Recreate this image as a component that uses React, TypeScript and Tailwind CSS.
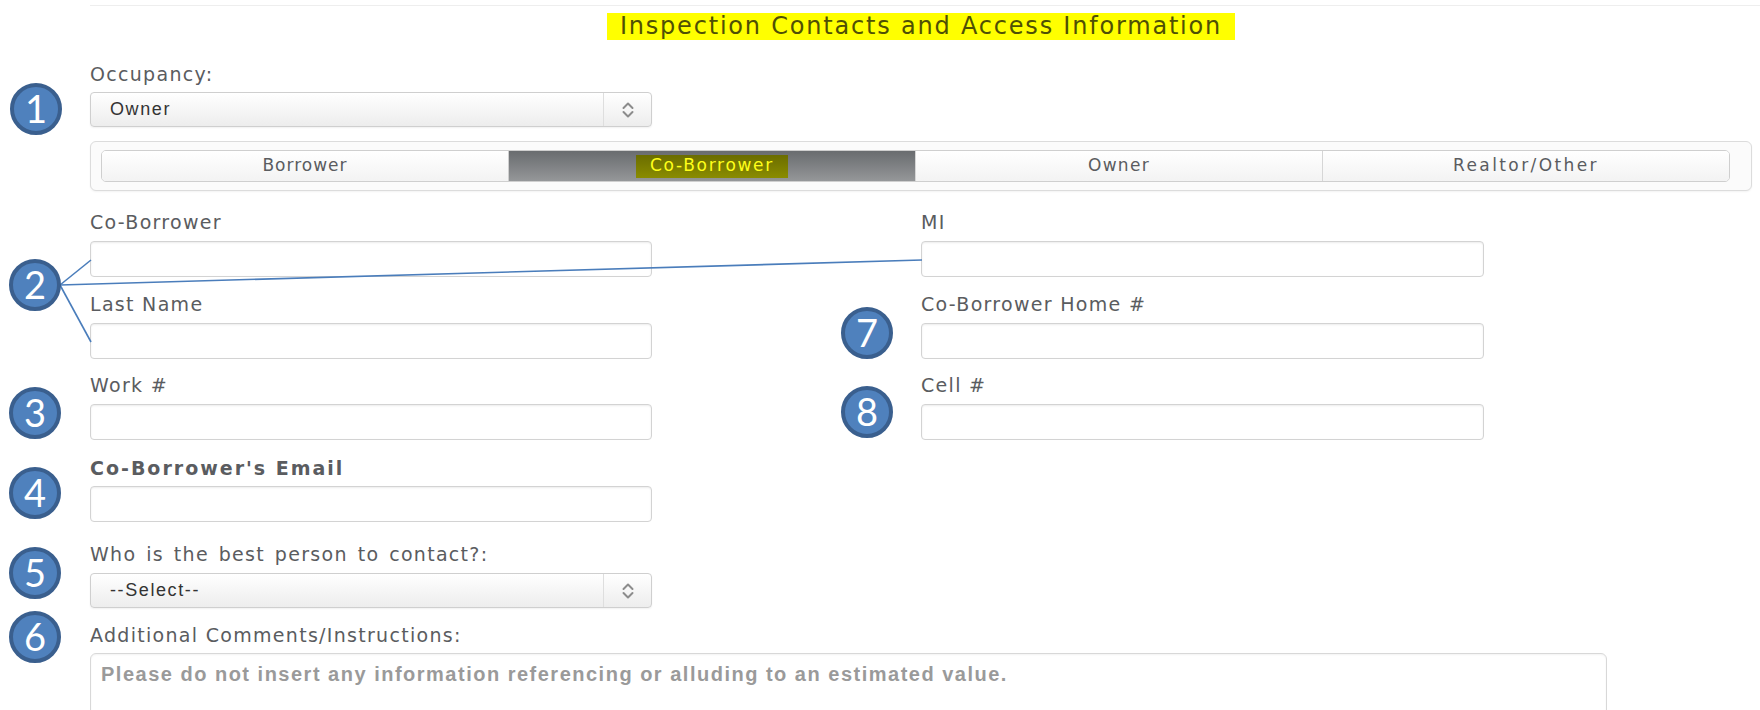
import React from "react";

const labelCls =
  "block h-[20px] font-['DejaVu_Sans',sans-serif] text-[19px] leading-[20px] tracking-[1.3px] text-[#5a5c60] whitespace-nowrap";

function Chevrons() {
  return (
    <svg width="14" height="18" viewBox="0 0 14 18" fill="none">
      <path d="M2.5 7 L7 2.5 L11.5 7" stroke="#8c8c8c" strokeWidth="2" strokeLinecap="round" strokeLinejoin="round" />
      <path d="M2.5 11 L7 15.5 L11.5 11" stroke="#8c8c8c" strokeWidth="2" strokeLinecap="round" strokeLinejoin="round" />
    </svg>
  );
}

function SelectBox({ value }: { value: string }) {
  return (
    <div className="flex h-[35px] w-[562px] items-center rounded-[4px] border border-[#cfcfcf] bg-gradient-to-b from-white to-[#ededed] shadow-[0_1px_2px_rgba(0,0,0,0.06)]">
      <span className="flex-1 pl-[19px] font-['Liberation_Sans',Arial,sans-serif] text-[18px] tracking-[1.6px] text-[#333]">
        {value}
      </span>
      <span className="flex h-full w-[48px] items-center justify-center border-l border-[#dedede]">
        <Chevrons />
      </span>
    </div>
  );
}

function TextBox({ wide }: { wide?: boolean }) {
  return (
    <div
      className={
        wide
          ? "h-[36px] w-[563px] rounded-[4px] border border-[#d3d3d3] bg-white shadow-[inset_0_1px_2px_rgba(0,0,0,0.08)]"
          : "h-[36px] w-[562px] rounded-[4px] border border-[#d3d3d3] bg-white shadow-[inset_0_1px_2px_rgba(0,0,0,0.08)]"
      }
    />
  );
}

function Field({ label, wide }: { label: string; wide?: boolean }) {
  return (
    <div className="flex flex-col">
      <span className={labelCls}>{label}</span>
      <div className="mt-[9px]">
        <TextBox wide={wide} />
      </div>
    </div>
  );
}

function Badge({ n, className }: { n: string; className: string }) {
  return (
    <div
      className={
        "absolute flex h-[52px] w-[52px] items-center justify-center rounded-full border-[4px] border-[#3a5f8e] bg-[#4f81bd] font-['Lato',sans-serif] text-[38px] leading-none text-white " +
        className
      }
    >
      <span className="-mt-[2px]">{n}</span>
    </div>
  );
}

const tabBase =
  "flex flex-1 items-center justify-center bg-gradient-to-b from-white to-[#f3f3f3] font-['DejaVu_Sans',sans-serif] text-[17px] text-[#5a5c60]";

export default function App() {
  return (
    <div className="relative h-[710px] w-[1760px] overflow-hidden bg-white">
      {/* top rule */}
      <div className="ml-[90px] mt-[5px] h-px bg-[#eeeeee]" />

      <div className="ml-[90px] w-[1662px]">
        {/* section title */}
        <div className="mt-[7px] flex justify-center">
          <h2 className="h-[27px] w-[628px] bg-[#ffff00] text-center font-['DejaVu_Sans',sans-serif] text-[24px] font-normal leading-[27px] tracking-[1.8px] text-[#4f5005] whitespace-nowrap">
            Inspection Contacts and Access Information
          </h2>
        </div>

        {/* occupancy */}
        <div className="mt-[24px]">
          <span className={labelCls}>Occupancy:</span>
        </div>
        <div className="mt-[8px]">
          <SelectBox value="Owner" />
        </div>

        {/* contact tabs */}
        <div className="mt-[14px] h-[50px] w-[1662px] rounded-[6px] border border-[#dcdcdc] bg-[#fbfbfb] pl-[10px] pt-[8px] shadow-[0_1px_2px_rgba(0,0,0,0.05)]">
          <div className="flex h-[32px] w-[1629px] overflow-hidden rounded-[5px] border border-[#cfcfcf]">
            <div className={tabBase + " tracking-[1px]"}>Borrower</div>
            <div className="flex flex-1 items-center justify-center border-l border-[#cfcfcf] bg-gradient-to-b from-[#696c6f] to-[#959799]">
              <span className="flex h-[23px] items-center bg-gradient-to-b from-[#6b6d00] to-[#8a8c00] px-[14px] font-['DejaVu_Sans',sans-serif] text-[17px] tracking-[1.7px] text-[#ffff1a]">
                Co-Borrower
              </span>
            </div>
            <div className={tabBase + " border-l border-[#d6d6d6] tracking-[1.3px]"}>Owner</div>
            <div className={tabBase + " border-l border-[#d6d6d6] tracking-[2.4px]"}>Realtor/Other</div>
          </div>
        </div>

        {/* name and phone fields */}
        <div className="mt-[21px] grid grid-cols-[562px_563px] gap-x-[269px]">
          <Field label="Co-Borrower" />
          <Field label="MI" wide />
          <div className="mt-[17px]">
            <Field label="Last Name" />
          </div>
          <div className="mt-[17px]">
            <Field label="Co-Borrower Home #" wide />
          </div>
          <div className="mt-[16px]">
            <Field label="Work #" />
          </div>
          <div className="mt-[16px]">
            <Field label="Cell #" wide />
          </div>
        </div>

        {/* email */}
        <div className="mt-[18px]">
          <span className={labelCls + " font-bold tracking-[2px]"}>Co-Borrower's Email</span>
          <div className="mt-[8px]">
            <TextBox />
          </div>
        </div>

        {/* best contact */}
        <div className="mt-[22px]">
          <span className={labelCls + " [word-spacing:2.5px]"}>Who is the best person to contact?:</span>
          <div className="mt-[9px]">
            <SelectBox value="--Select--" />
          </div>
        </div>

        {/* comments */}
        <div className="mt-[17px]">
          <span className={labelCls}>Additional Comments/Instructions:</span>
          <div className="mt-[8px] h-[110px] w-[1517px] rounded-[6px] border border-[#d8d8d8] bg-white px-[10px] pt-[9px] font-['Liberation_Sans',Arial,sans-serif] text-[20px] font-bold leading-[22px] tracking-[1.5px] text-[#9a9a9a] shadow-[inset_0_1px_2px_rgba(0,0,0,0.05)]">
            Please do not insert any information referencing or alluding to an estimated value.
          </div>
        </div>
      </div>

      {/* connector lines for callout 2 */}
      <svg className="pointer-events-none absolute left-0 top-0" width="1760" height="710">
        <g stroke="#4a7dbb" strokeWidth="1.6" fill="none">
          <line x1="60" y1="285" x2="91" y2="260" />
          <line x1="60" y1="285" x2="922" y2="260" />
          <line x1="60" y1="285" x2="91" y2="342" />
        </g>
      </svg>

      {/* numbered callouts */}
      <Badge n="1" className="left-[10px] top-[83px]" />
      <Badge n="2" className="left-[9px] top-[259px]" />
      <Badge n="3" className="left-[9px] top-[387px]" />
      <Badge n="4" className="left-[9px] top-[467px]" />
      <Badge n="5" className="left-[9px] top-[547px]" />
      <Badge n="6" className="left-[9px] top-[611px]" />
      <Badge n="7" className="left-[841px] top-[307px]" />
      <Badge n="8" className="left-[841px] top-[386px]" />
    </div>
  );
}
